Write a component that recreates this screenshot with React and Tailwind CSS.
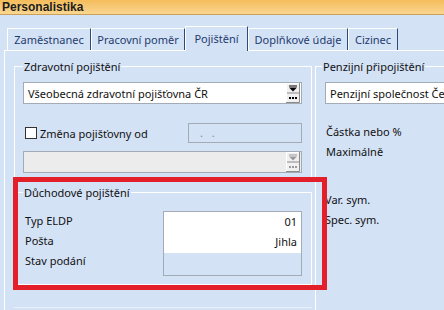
const tabs = [
  { label: "Zaměstnanec", w: "w-[84px]" },
  { label: "Pracovní poměr", w: "w-[94px]" },
  { label: "Pojištění", w: "w-[63px]", active: true },
  { label: "Doplňkové údaje", w: "w-[100px]" },
  { label: "Cizinec", w: "w-[50px]" },
];

const DropButton = ({ disabled }) => {
  const c = disabled ? "#9a9a9a" : "#000";
  return (
    <svg width="14" height="20" viewBox="0 0 14 20" className="shrink-0">
      <rect x="0" y="0" width="14" height="20" fill="#f0f0f0" />
      <path d="M0 19.5H13.5V0" fill="none" stroke="#8a8a8a" />
      <path d="M0.5 19V0.5H13" fill="none" stroke="#fff" />
      <path d="M1 10H13" stroke="#8a8a8a" />
      <path d="M3 3H11" stroke={c} />
      <path d="M3 4.5H11L7 8.5Z" fill={c} />
      <rect x="3" y="14" width="2" height="2" fill={c} />
      <rect x="6" y="14" width="2" height="2" fill={c} />
      <rect x="9" y="14" width="2" height="2" fill={c} />
    </svg>
  );
};

const Combo = ({ text, disabled, className = "" }) => (
  <div
    className={`h-[22px] flex items-center border border-[#a3abb6] ${
      disabled ? "bg-[#ececec]" : "bg-white"
    } ${className}`}
  >
    <span className="flex-1 pl-[4px] whitespace-nowrap overflow-hidden">{text}</span>
    <div className="pr-[1px]">
      <DropButton disabled={disabled} />
    </div>
  </div>
);

export default function App() {
  return (
    <div className="relative w-[444px] h-[310px] overflow-hidden bg-[#d4e2f6] font-['Noto_Sans',sans-serif] text-[11px] leading-[15px] text-[#111] flex flex-col">
      {/* Title */}
      <div className="h-[15px] shrink-0 bg-gradient-to-b from-[#f5bc5a] to-[#f9d68f] border-b border-[#c8a25c] pl-[2px] font-['Liberation_Sans',sans-serif] font-bold text-[12px] leading-[14px] text-[#1d1d1d]">
        Personalistika
      </div>

      {/* Tabs */}
      <div className="h-[35px] shrink-0 flex items-end pl-[7px]">
        {tabs.map((t) => (
          <div
            key={t.label}
            className={`${t.w} flex items-center justify-center border-l border-t border-white border-r border-r-[#2d4a78] text-[#1e3b6d] whitespace-nowrap ${
              t.active ? "h-[25px] -mb-px bg-[#d4e2f6] relative z-10 pb-[2px]" : "h-[22px]"
            }`}
          >
            {t.label}
          </div>
        ))}
      </div>

      {/* Panel */}
      <div className="flex-1 ml-[4px] border-l border-t border-white flex gap-[3px] pl-[9px]">
        {/* Left column */}
        <div className="w-[298px] shrink-0 flex flex-col">
          <fieldset className="mt-[8px] border border-white pl-[8px] pr-[9px] pb-[6px]">
            <legend className="px-[1px]">Zdravotní pojištění</legend>
            <Combo text="Všeobecná zdravotní pojišťovna ČR" className="mt-[8px]" />
            <div className="mt-[19px] h-[20px] flex items-center">
              <div className="w-[12px] h-[12px] ml-[2px] border border-[#333] bg-white" />
              <span className="ml-[3px] flex-1">Změna pojišťovny od</span>
              <div className="w-[114px] h-[20px] border border-[#a3abb6] text-[#8a8a8a] pl-[11px] leading-[17px] tracking-[3px]">
                . .
              </div>
            </div>
            <Combo disabled text="" className="mt-[8px]" />
          </fieldset>

          <fieldset className="mt-[5px] border border-white pl-[10px] pr-[9px] pb-[8px]">
            <legend className="-ml-[2px] px-[1px]">Důchodové pojištění</legend>
            <div className="mt-[11px] flex">
              <div className="w-[138px] flex flex-col">
                <div className="h-[20px] leading-[20px]">Typ ELDP</div>
                <div className="h-[20px] leading-[20px]">Pošta</div>
                <div className="h-[20px] leading-[20px]">Stav podání</div>
              </div>
              <div className="w-[139px] h-[65px] border border-[#a3abb6] flex flex-col">
                <div className="bg-white h-[41px] text-right pr-[4px]">
                  <div className="h-[20px] leading-[20px]">01</div>
                  <div className="h-[20px] leading-[20px]">Jihla</div>
                </div>
              </div>
            </div>
          </fieldset>
          <div className="mt-[22px] border-b border-[#eaf1fb]" />
        </div>

        {/* Right column */}
        <fieldset className="mt-[8px] flex-1 min-w-0 border-l border-t border-white pl-[9px]">
          <legend className="-ml-[3px] px-[1px]">Penzijní připojištění</legend>
          <Combo text="Penzijní společnost Če" className="mt-[8px] w-[160px]" />
          <div className="mt-[18px] h-[20px] leading-[20px] pl-[1px]">Částka nebo %</div>
          <div className="h-[20px] leading-[20px] pl-[1px]">Maximálně</div>
          <div className="mt-[28px] h-[20px] leading-[20px]">Var. sym.</div>
          <div className="h-[20px] leading-[20px]">Spec. sym.</div>
        </fieldset>
      </div>

      {/* Highlight */}
      <div className="absolute left-[13px] top-[177px] w-[314px] h-[113px] border-[5px] border-[#e3202a]" />
    </div>
  );
}
